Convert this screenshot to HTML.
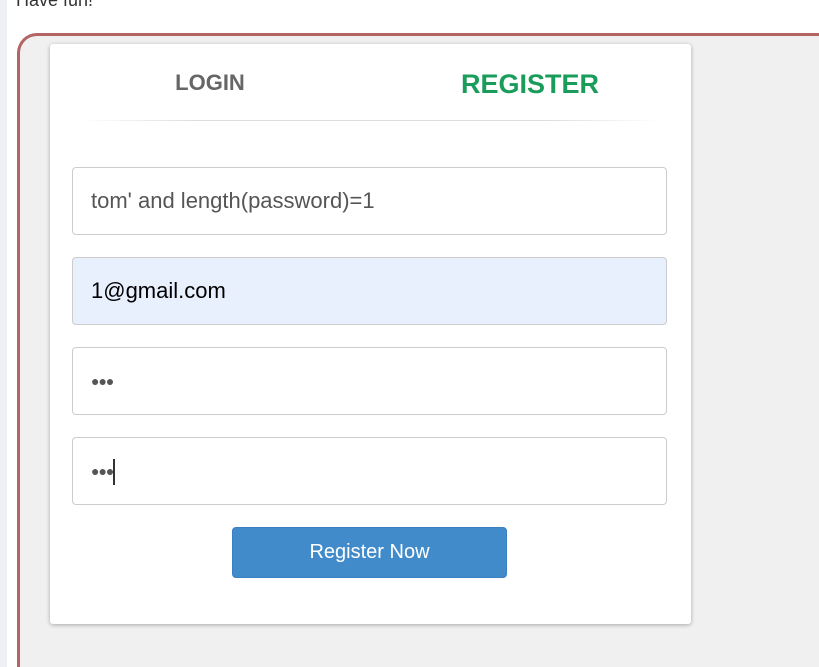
<!DOCTYPE html>
<html style="overflow:hidden;height:667px"><head><meta charset="utf-8"><style>
*{box-sizing:border-box}
html,body{margin:0;width:819px;height:667px;overflow:hidden}
body{background:#fff;font-family:"Liberation Sans",Arial,sans-serif;position:relative}
.strip{position:absolute;left:0;top:0;width:7px;height:667px;background:#eef0f6}
.fun{position:absolute;left:16px;top:-10px;font-size:18px;color:#333}
.outer{position:absolute;left:17px;top:33px;width:802px;height:634px;border:3px solid #b36565;border-right:none;border-bottom:none;border-top-left-radius:20px;background:#f0f0f0}
.card{position:absolute;left:50px;top:44px;width:641px;height:580px;background:#fff;border-radius:3px;box-shadow:0 1px 4px rgba(0,0,0,.3)}
.tab{position:absolute;font-weight:bold;text-align:center}
.login{left:110px;width:100px;top:26px;font-size:22px;color:#666}
.reg{left:400px;width:160px;top:25px;font-size:27px;color:#1a9c5b}
.div{position:absolute;left:30px;width:580px;top:76px;height:1px;background:linear-gradient(90deg,rgba(220,220,220,0),#ddd 20%,#ddd 80%,rgba(220,220,220,0))}
.in{position:absolute;left:22px;width:595px;height:68px;border:1px solid #ccc;border-radius:4px;font-size:22px;color:#555;padding-left:18px;line-height:66px;background:#fff}
.btn{position:absolute;left:182px;top:483px;width:275px;height:51px;background:#428bca;border:1px solid #3b7fc0;border-radius:4px;color:#fff;font-size:20px;text-align:center;line-height:49px}
.dots{font-size:14px;letter-spacing:-1px}
</style></head><body>
<div class="strip"></div>
<div class="fun">Have fun!</div>
<div class="outer"></div>
<div class="card">
<div class="tab login">LOGIN</div>
<div class="tab reg">REGISTER</div>
<div class="div"></div>
<div class="in" style="top:123px">tom' and length(password)=1</div>
<div class="in" style="top:213px;background:#e8f0fe;color:#000">1@gmail.com</div>
<div class="in dots" style="top:303px">●●●</div>
<div class="in dots" style="top:393px">●●●<span style="display:inline-block;width:2px;height:26px;background:#333;vertical-align:middle;margin-left:0"></span></div>
<div class="btn">Register Now</div>
</div>
</body></html>
